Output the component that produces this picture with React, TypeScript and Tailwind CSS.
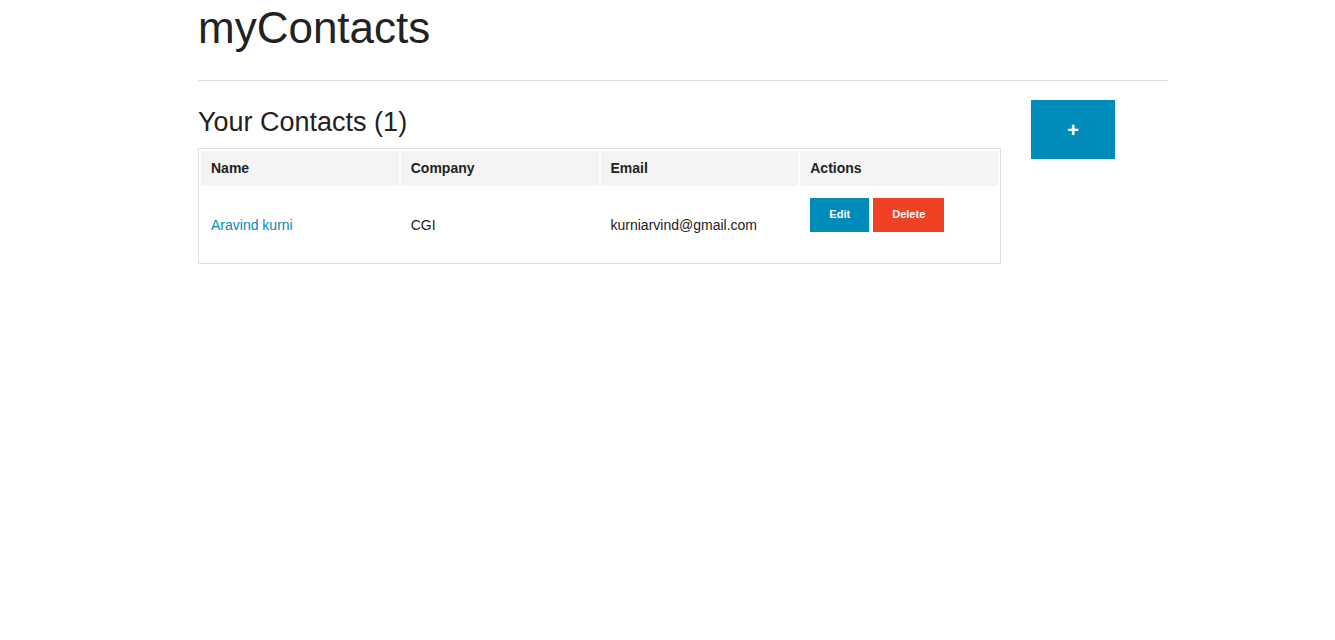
export default function App() {
	const contacts = [
		{ name: "Aravind kurni", company: "CGI", email: "kurniarvind@gmail.com" },
	];
	return (
		<div className="min-h-screen bg-white font-['Liberation_Sans',Arial,sans-serif] text-[#222222]">
			<div className="ml-[198px] w-[970px]">
				<h1 className="mt-[6px] text-[44px] leading-[44px]">myContacts</h1>
				<hr className="mt-[30px] border-t border-[#dddddd]" />
				<div className="flex items-start pt-[19px]">
					<div className="w-[803px] pt-[9px]">
						<h3 className="text-[27px] leading-[27px]">
							Your Contacts ({contacts.length})
						</h3>
						<table className="mt-[12px] w-[803px] table-fixed border-separate border-spacing-[2px] border border-[#dddddd] text-sm">
							<thead>
								<tr>
									{["Name", "Company", "Email", "Actions"].map((h) => (
										<th
											key={h}
											className="bg-[#f4f4f4] px-[10px] pb-[9px] pt-[8px] text-left font-bold leading-[18px]"
										>
											{h}
										</th>
									))}
								</tr>
							</thead>
							<tbody>
								{contacts.map((c) => (
									<tr key={c.email}>
										<td className="px-[10px] align-middle leading-[18px]">
											<a href="#" className="text-[#008cba]">
												{c.name}
											</a>
										</td>
										<td className="px-[10px] align-middle leading-[18px]">
											{c.company}
										</td>
										<td className="px-[10px] align-middle leading-[18px]">
											{c.email}
										</td>
										<td className="px-[10px] pb-[9px] pt-[10px] align-top">
											<div className="mb-[20px] flex gap-[4px]">
												<button className="h-[34px] w-[59px] bg-[#008cba] text-[11px] font-bold text-white">
													Edit
												</button>
												<button className="h-[34px] w-[71px] bg-[#f04124] text-[11px] font-bold text-white">
													Delete
												</button>
											</div>
										</td>
									</tr>
								))}
							</tbody>
						</table>
					</div>
					<div className="ml-[30px]">
						<button className="flex h-[59px] w-[84px] items-center justify-center bg-[#008cba] text-[20px] font-bold text-white">
							+
						</button>
					</div>
				</div>
			</div>
		</div>
	);
}
